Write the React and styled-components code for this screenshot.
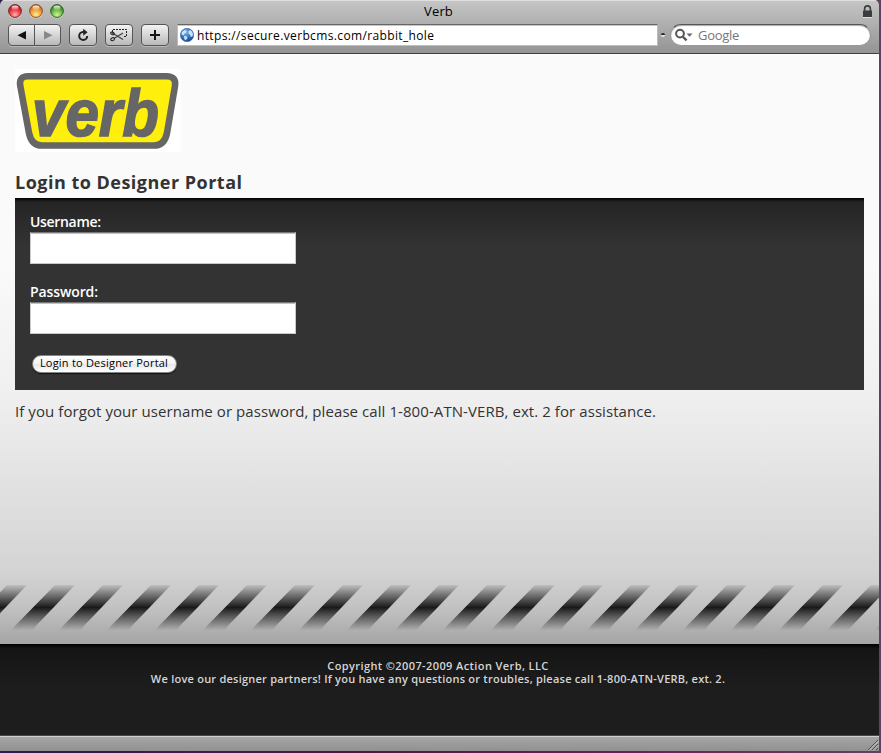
import React from 'react';
import styled, { createGlobalStyle } from 'styled-components';

const GlobalStyle = createGlobalStyle`
  * { box-sizing: border-box; }
  body {
    margin: 0;
    background: #5b3f5b;
    font-family: "Open Sans", "Noto Sans", sans-serif;
    color: #333;
    overflow: hidden;
  }
`;

const Desktop = styled.div`
  height: 753px;
  padding: 0 2px 2px 0;
  background: linear-gradient(90deg, #2a1c50 0, #4b1746 40%, #70205c 75%, #5f4260 100%);
`;

const Window = styled.div`
  display: flex;
  flex-direction: column;
  height: 751px;
  border-radius: 5px 5px 0 0;
  overflow: hidden;
`;

const Chrome = styled.header`
  flex: 0 0 54px;
  background: linear-gradient(#c6c6c6, #949494);
  border-bottom: 1px solid #404040;
  box-shadow: inset 0 1px #dedede;
`;

const TitleBar = styled.div`
  display: grid;
  grid-template-columns: 1fr auto 1fr;
  align-items: center;
  height: 24px;
  padding: 0 6px 2px 7px;
`;

const Lights = styled.div`
  display: flex;
  gap: 5px;
`;

const Title = styled.div`
  margin-right: 3px;
  font-size: 13px;
  line-height: 22px;
  letter-spacing: 0.15px;
  color: #000;
`;

const Secure = styled.div`
  display: flex;
  justify-content: flex-end;
`;

const Toolbar = styled.div`
  display: flex;
  align-items: center;
  gap: 8px;
  height: 22px;
  padding: 0 8px 0 8px;
`;

const ToolButton = styled.button`
  display: flex;
  align-items: center;
  justify-content: center;
  width: ${(p) => p.$width || 28}px;
  height: 22px;
  padding: 0;
  border: 1px solid #555;
  border-radius: ${(p) => p.$radius || '4px'};
  margin-left: ${(p) => (p.$joined ? '-1px' : 0)};
  background: linear-gradient(#f3f3f3, #d6d6d6 50%, #b9b9b9);
  box-shadow: 0 1px rgba(255, 255, 255, 0.3);
`;

const ButtonPair = styled.div`
  display: flex;
`;

const AddressField = styled.div`
  display: flex;
  align-items: center;
  gap: 3px;
  width: 481px;
  height: 22px;
  padding-left: 2px;
  background: #fff;
  border: 1px solid #bdbdbd;
  border-top: 1px solid #666;
  box-shadow: inset 0 1px #c8c8c8;
`;

const Address = styled.span`
  padding-top: 2px;
  font-size: 12px;
  line-height: 18px;
  letter-spacing: 0.361px;
  color: #000;
`;

const Grip = styled.span`
  width: 4px;
  height: 4px;
  border-radius: 2px;
  margin: 0 -4px 0 -5px;
  background: linear-gradient(#222 50%, #e8e8e8 50%);
`;

const SearchField = styled.div`
  display: flex;
  align-items: center;
  gap: 5px;
  width: 201px;
  height: 22px;
  margin-left: auto;
  padding-left: 4px;
  border-radius: 11px;
  border: 1px solid #999;
  border-top-color: #555;
  background: #fff;
  box-shadow: inset 0 1px 1px #aaa;
`;

const Placeholder = styled.span`
  font-size: 13px;
  line-height: 20px;
  letter-spacing: -0.3px;
  color: #777;
`;

const Page = styled.main`
  display: flex;
  flex-direction: column;
  height: 590px;
  padding: 15px 15px 0;
  background: linear-gradient(
    #fafafa 0,
    #fafafa 210px,
    #f0f0f0 336px,
    #e7e7e7 396px,
    #d3d3d3 520px,
    #c4c4c4 550px,
    #a5a5a5 590px
  );
`;

const LogoBox = styled.div`
  width: 166px;
  height: 83px;
  background: #fff;
`;

const Heading = styled.h1`
  margin: 17px 0 0;
  height: 29px;
  font-size: 18px;
  line-height: 26px;
  letter-spacing: 0.487px;
  white-space: nowrap;
`;

const LoginPanel = styled.form`
  display: flex;
  flex-direction: column;
  align-items: flex-start;
  height: 192px;
  padding: 13px 15px 0;
  background: linear-gradient(#000 0, #242424 4px, #262626 8px, #333 48px);
`;

const Label = styled.label`
  height: 21px;
  font-size: 14px;
  font-weight: 600;
  line-height: 21px;
  letter-spacing: ${(p) => p.$tracking}px;
  color: #fff;
`;

const Field = styled.input`
  width: 266px;
  height: 32px;
  margin-bottom: 17px;
  border: 1px solid #c9c9c9;
  border-top: 1px solid #777;
  border-radius: 0;
  background: #fff;
  box-shadow: inset 0 1px #c2c2c2;
  outline: 0;
`;

const Submit = styled.button`
  width: 145px;
  height: 18px;
  margin: 4px 0 0 2px;
  padding: 0 1px 2px 0;
  border: 1px solid #858585;
  border-radius: 9px;
  background: linear-gradient(#fff 0, #f4f4f4 48%, #e6e6e6 50%, #fff 100%);
  box-shadow: 0 1px 1px #111;
  font: 11px/14px "Open Sans", sans-serif;
  letter-spacing: 0.214px;
  white-space: nowrap;
  color: #000;
`;

const Help = styled.p`
  margin: 11px 0 0;
  font-size: 15px;
  line-height: 20px;
  letter-spacing: 0.073px;
  white-space: nowrap;
`;

const StripeBand = styled.svg`
  display: block;
  flex: none;
  width: 879px;
  height: 45px;
  margin: auto -15px 14px;
`;

const Footer = styled.footer`
  height: 91px;
  padding: 15px 3px 0 0;
  background: linear-gradient(#000 0, #151515 5px, #1d1d1d 44px);
  text-align: center;
  font-size: 11px;
  font-weight: 600;
  line-height: 13px;
  color: #d6d6d6;
`;

const FooterLine = styled.div`
  letter-spacing: ${(p) => p.$tracking}px;
  white-space: nowrap;
`;

const StatusBar = styled.div`
  display: flex;
  justify-content: flex-end;
  align-items: flex-end;
  height: 16px;
  border-top: 1px solid #484848;
  box-shadow: inset 0 1px #d0d0d0;
  background: linear-gradient(#a6a6a6, #919191);
`;

function Light({ id, edge, dark, mid, glow }) {
  return (
    <svg width="16" height="16" viewBox="0 0 16 16">
      <defs>
        <radialGradient id={id} cx=".5" cy=".8" r=".75">
          <stop offset="0" stopColor={glow} />
          <stop offset=".55" stopColor={mid} />
          <stop offset="1" stopColor={dark} />
        </radialGradient>
        <linearGradient id={`${id}-shine`} x2="0" y2="1">
          <stop offset="0" stopColor="#fff" stopOpacity=".95" />
          <stop offset="1" stopColor="#fff" stopOpacity=".1" />
        </linearGradient>
      </defs>
      <circle cx="8" cy="8.6" r="7" fill="#fff" opacity=".45" />
      <circle cx="8" cy="8" r="6.4" fill={`url(#${id})`} stroke={edge} />
      <ellipse cx="8" cy="4.7" rx="3.5" ry="2.3" fill={`url(#${id}-shine)`} />
    </svg>
  );
}

function LockIcon() {
  return (
    <svg width="11" height="13" viewBox="0 0 11 13">
      <path d="M2.6 6V3.8a2.9 2.9 0 0 1 5.8 0V6" fill="none" stroke="#3c3c3c" strokeWidth="1.6" />
      <path d="M1 12.5h9" stroke="#ddd" />
      <rect x="1" y="5.5" width="9" height="6.5" rx=".5" fill="#3c3c3c" />
    </svg>
  );
}

function Arrow({ forward }) {
  return (
    <svg width="10" height="10" viewBox="0 0 10 10">
      <path d={forward ? 'M1 1l8.5 4.2L1 9.4z' : 'M9 1L.5 5.2 9 9.4z'} fill={forward ? '#888' : '#111'} />
    </svg>
  );
}

function ReloadIcon() {
  return (
    <svg width="14" height="14" viewBox="0 0 14 14">
      <path d="M8.2 4H7a4 4 0 1 0 4.2 4" fill="none" stroke="#222" strokeWidth="2" />
      <path d="M7.2 .8l4.4 3.4-4.4 3.6z" fill="#222" />
    </svg>
  );
}

function SnipIcon() {
  return (
    <svg width="18" height="14" viewBox="0 0 18 14" fill="none" stroke="#222">
      <path d="M2.5 4V1.500h14v7H13" strokeDasharray="2 1" />
      <path d="M1.500 4.500L13 11.500M4 10.500L13 5" stroke="#444" strokeWidth="1.300" />
      <ellipse cx="2.600" cy="11.200" rx="1.900" ry="1.400" transform="rotate(-25 2.600 11.200)" />
      <ellipse cx="2.400" cy="5.400" rx="1.900" ry="1.200" transform="rotate(25 2.400 5.400)" />
    </svg>
  );
}

function PlusIcon() {
  return (
    <svg width="12" height="12" viewBox="0 0 12 12">
      <path d="M6 1v10M1 6h10" stroke="#151515" strokeWidth="2" />
    </svg>
  );
}

function GlobeIcon() {
  return (
    <svg width="14" height="14" viewBox="0 0 14 14">
      <defs>
        <radialGradient id="globe" cx=".4" cy=".3" r=".75">
          <stop offset="0" stopColor="#78b5f0" />
          <stop offset=".6" stopColor="#2c70c0" />
          <stop offset="1" stopColor="#153f86" />
        </radialGradient>
      </defs>
      <circle cx="7" cy="7" r="6.7" fill="url(#globe)" stroke="#3d669d" strokeWidth=".6" />
      <path d="M1.5 4.5l3-2.5 2.2.8-.4 1.8-1.8 1-.7 1.6-1.8-.5zM4 7.7l3 .8.4 1.5-1.8 2.5L4.3 11zM8.5 3l2-1 1.8 2 .8 2.5-1 2.5-1.7-.5-.4-2-1.5-.8z" fill="#d9edfb" opacity=".9" />
    </svg>
  );
}

function SearchIcon() {
  return (
    <svg width="18" height="14" viewBox="0 0 18 14">
      <circle cx="5" cy="5.6" r="3.9" fill="none" stroke="#555" strokeWidth="2" />
      <path d="M7.9 8.7l3.7 3.7" stroke="#555" strokeWidth="2.3" />
      <path d="M11.5 5.5h6l-3 3.3z" fill="#666" />
    </svg>
  );
}

function VerbLogo() {
  return (
    <svg width="166" height="83" viewBox="0 0 166 83">
      <path
        d="M13 7.300H151.500Q161.500 7.300 160 17L152 64Q149.500 76.500 139 76.500H27Q16.500 76.500 14 64L5.300 17Q3.500 7.300 13 7.300Z"
        fill="#ffef0d"
        stroke="#666"
        strokeWidth="6.6"
      />
      <text
        x="17"
        y="66.800"
        textLength="127"
        lengthAdjust="spacingAndGlyphs"
        fontFamily="Liberation Sans"
        fontSize="66"
        fontWeight="700"
        fontStyle="italic"
        fill="#666"
        stroke="#666"
        strokeWidth="1.600"
      >
        verb
      </text>
    </svg>
  );
}

const stripeOffsets = Array.from({ length: 20 }, (_, i) => (i - 1) * 48 + 11);

function Stripes() {
  return (
    <StripeBand viewBox="0 0 879 45">
      <defs>
        <linearGradient id="stripe" gradientUnits="userSpaceOnUse" x1="0" y1="0" x2="0" y2="45">
          <stop offset="0" stopColor="#1a1a1a" stopOpacity=".08" />
          <stop offset=".5" stopColor="#1a1a1a" stopOpacity="1" />
          <stop offset="1" stopColor="#1a1a1a" stopOpacity=".02" />
        </linearGradient>
      </defs>
      {stripeOffsets.map((x) => (
        <path key={x} d={`M${x} 45L${x + 44} 0h20L${x + 21} 45z`} fill="url(#stripe)" />
      ))}
    </StripeBand>
  );
}

function ResizeGrip() {
  return (
    <svg width="13" height="13" viewBox="0 0 13 13">
      <path d="M2 12L12 2M6 12l6-6M10 12l2-2" stroke="#505050" />
      <path d="M3 12.500L12.500 3M7 12.500L12.500 7" stroke="#d0d0d0" strokeWidth=".8" />
    </svg>
  );
}

export default function App() {
  return (
    <Desktop>
      <GlobalStyle />
      <Window>
        <Chrome>
          <TitleBar>
            <Lights>
              <Light id="close" edge="#7c2525" dark="#a50e18" mid="#ea3d45" glow="#ffb0ad" />
              <Light id="minimize" edge="#8b4e20" dark="#bf5a14" mid="#f0a03c" glow="#fff08c" />
              <Light id="zoom" edge="#2f6222" dark="#29751d" mid="#6cb746" glow="#d2f596" />
            </Lights>
            <Title>Verb</Title>
            <Secure><LockIcon /></Secure>
          </TitleBar>
          <Toolbar>
            <ButtonPair>
              <ToolButton type="button" aria-label="Back" $width={27} $radius="4px 0 0 4px"><Arrow /></ToolButton>
              <ToolButton type="button" aria-label="Forward" $width={27} $radius="0 4px 4px 0" $joined><Arrow forward /></ToolButton>
            </ButtonPair>
            <ToolButton type="button" aria-label="Reload"><ReloadIcon /></ToolButton>
            <ToolButton type="button" aria-label="Web clip"><SnipIcon /></ToolButton>
            <ToolButton type="button" aria-label="Add bookmark"><PlusIcon /></ToolButton>
            <AddressField>
              <GlobeIcon />
              <Address>https://secure.verbcms.com/rabbit_hole</Address>
            </AddressField>
            <Grip />
            <SearchField>
              <SearchIcon />
              <Placeholder>Google</Placeholder>
            </SearchField>
          </Toolbar>
        </Chrome>
        <Page>
          <LogoBox><VerbLogo /></LogoBox>
          <Heading>Login to Designer Portal</Heading>
          <LoginPanel>
            <Label htmlFor="username" $tracking={-0.324}>Username:</Label>
            <Field id="username" />
            <Label htmlFor="password" $tracking={-0.114}>Password:</Label>
            <Field id="password" type="password" />
            <Submit type="button">Login to Designer Portal</Submit>
          </LoginPanel>
          <Help>If you forgot your username or password, please call 1-800-ATN-VERB, ext. 2 for assistance.</Help>
          <Stripes />
        </Page>
        <Footer>
          <FooterLine $tracking={0.398}>Copyright ©2007-2009 Action Verb, LLC</FooterLine>
          <FooterLine $tracking={0.235}>
            We love our designer partners! If you have any questions or troubles, please call 1-800-ATN-VERB, ext. 2.
          </FooterLine>
        </Footer>
        <StatusBar><ResizeGrip /></StatusBar>
      </Window>
    </Desktop>
  );
}
